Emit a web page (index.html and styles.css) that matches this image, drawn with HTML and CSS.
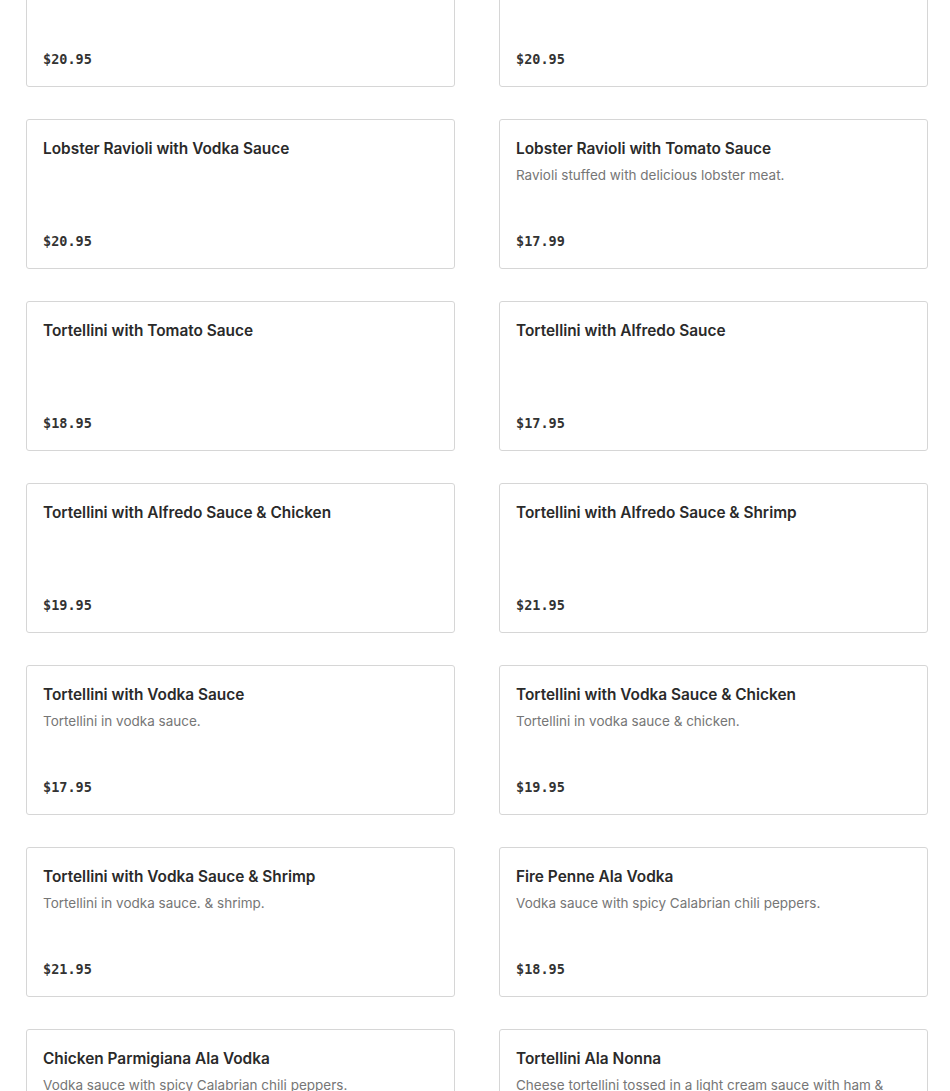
FILE: index.html
```html
<!DOCTYPE html>
<html lang="en">
<head>
<meta charset="utf-8">
<title>Menu</title>
<link rel="stylesheet" href="styles.css">
</head>
<body>
<main class="menu">
  <div class="grid">
    <article class="card"><h3 class="title">Lobster Ravioli with Alfredo Sauce</h3><p class="price">$20.95</p></article>
    <article class="card"><h3 class="title">Lobster Ravioli with Pink Sauce</h3><p class="price">$20.95</p></article>

    <article class="card"><h3 class="title">Lobster Ravioli with Vodka Sauce</h3><p class="price">$20.95</p></article>
    <article class="card"><h3 class="title">Lobster Ravioli with Tomato Sauce</h3><p class="desc">Ravioli stuffed with delicious lobster meat.</p><p class="price">$17.99</p></article>

    <article class="card"><h3 class="title">Tortellini with Tomato Sauce</h3><p class="price">$18.95</p></article>
    <article class="card"><h3 class="title">Tortellini with Alfredo Sauce</h3><p class="price">$17.95</p></article>

    <article class="card"><h3 class="title">Tortellini with Alfredo Sauce &amp; Chicken</h3><p class="price">$19.95</p></article>
    <article class="card"><h3 class="title">Tortellini with Alfredo Sauce &amp; Shrimp</h3><p class="price">$21.95</p></article>

    <article class="card"><h3 class="title">Tortellini with Vodka Sauce</h3><p class="desc">Tortellini in vodka sauce.</p><p class="price">$17.95</p></article>
    <article class="card"><h3 class="title">Tortellini with Vodka Sauce &amp; Chicken</h3><p class="desc">Tortellini in vodka sauce &amp; chicken.</p><p class="price">$19.95</p></article>

    <article class="card"><h3 class="title">Tortellini with Vodka Sauce &amp; Shrimp</h3><p class="desc">Tortellini in vodka sauce. &amp; shrimp.</p><p class="price">$21.95</p></article>
    <article class="card"><h3 class="title">Fire Penne Ala Vodka</h3><p class="desc">Vodka sauce with spicy Calabrian chili peppers.</p><p class="price">$18.95</p></article>

    <article class="card"><h3 class="title">Chicken Parmigiana Ala Vodka</h3><p class="desc">Vodka sauce with spicy Calabrian chili peppers.</p><p class="price">$19.95</p></article>
    <article class="card"><h3 class="title">Tortellini Ala Nonna</h3><p class="desc">Cheese tortellini tossed in a light cream sauce with ham &amp; peas.</p><p class="price">$18.95</p></article>
  </div>
</main>
</body>
</html>
```

FILE: styles.css
```css
* { box-sizing: border-box; }

html, body {
  margin: 0;
  padding: 0;
  background: #ffffff;
}

body {
  font-family: Inter, "Noto Sans", "Liberation Sans", sans-serif;
  color: #2a2a2a;
}

.menu {
  padding: 0 22px 40px 26px;
  margin-top: -63px;
}

.grid {
  display: grid;
  grid-template-columns: 1fr 1fr;
  column-gap: 44px;
  row-gap: 32px;
}

.card {
  height: 150px;
  border: 1px solid #d6d6d6;
  border-radius: 3px;
  padding: 17px 16px 16px 16px;
  display: flex;
  flex-direction: column;
  overflow: hidden;
  background: #fff;
}

.title {
  margin: 0;
  font-size: 15.4px;
  line-height: 24px;
  font-weight: 600;
  color: #2a2a2a;
  letter-spacing: 0;
}

.desc {
  margin: 4px 0 0 0;
  font-size: 13.5px;
  line-height: 20px;
  font-weight: 400;
  color: #767676;
}

.price {
  margin: auto 0 0 0;
  font-family: "DejaVu Sans Mono", "Liberation Mono", monospace;
  font-size: 13.5px;
  line-height: 20px;
  font-weight: 700;
  color: #333333;
  position: relative;
  top: -1px;
}
```
